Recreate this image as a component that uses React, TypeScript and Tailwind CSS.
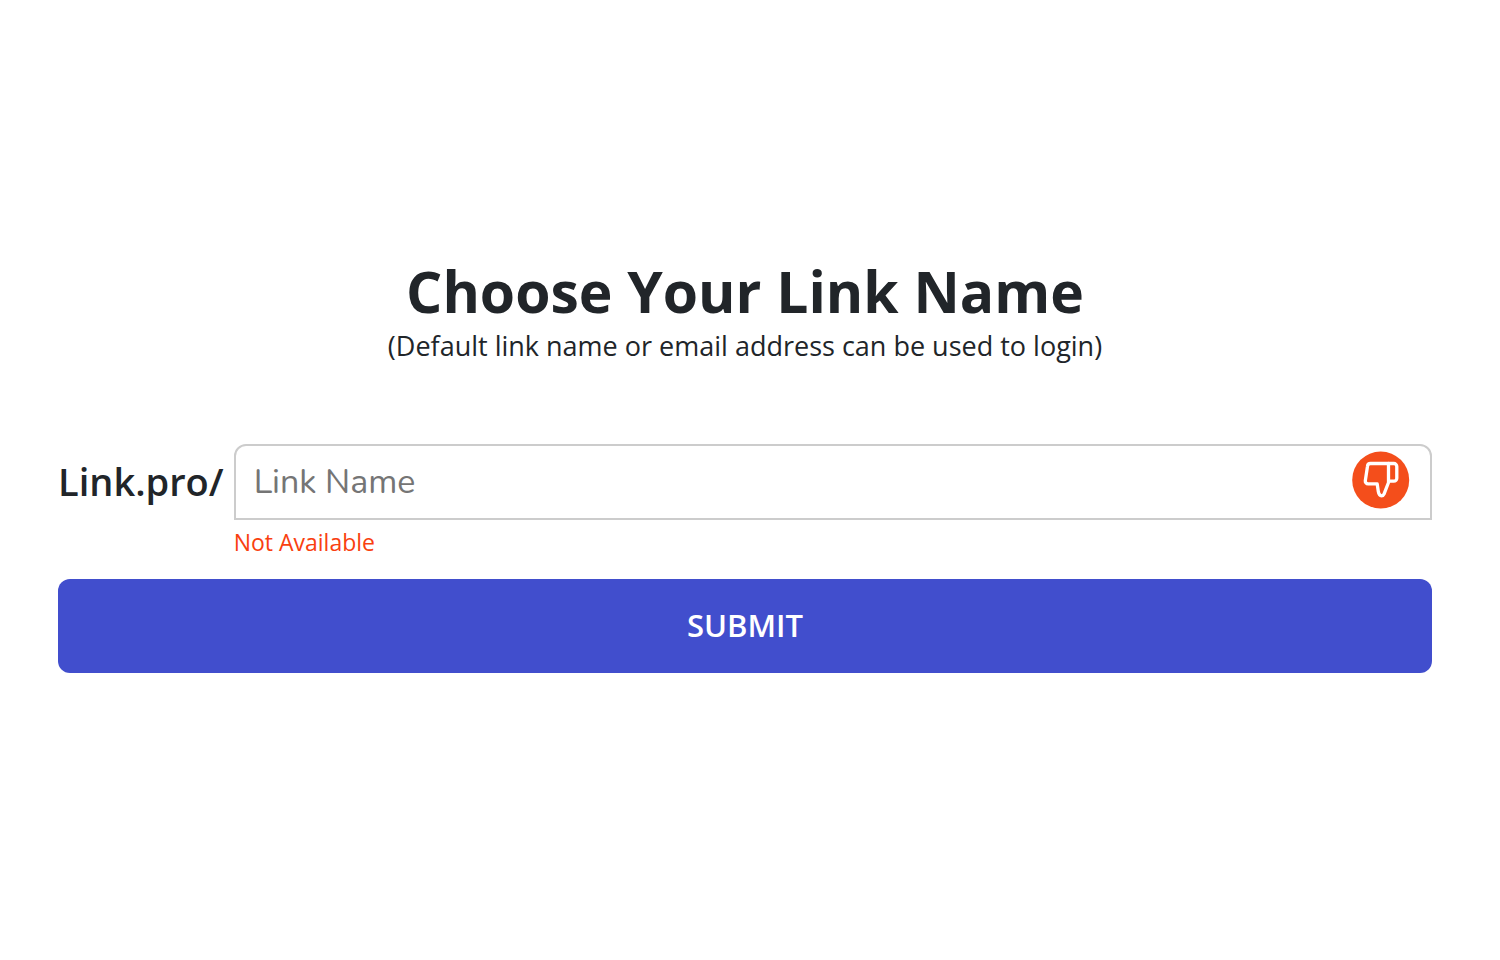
import { useState } from "react";

function ThumbsDownIcon() {
  return (
    <svg viewBox="0 0 58 58" className="size-[58px]" aria-hidden="true">
      <circle cx="28.700" cy="29" r="28.5" fill="#f44e1b" />
      <g fill="none" stroke="#fff" strokeWidth="3.300" strokeLinejoin="round" strokeLinecap="round">
        <path d="M36.500 12.500H18.500a3 3 0 0 0-3 2.700L13.300 29.700a2.800 2.800 0 0 0 2.800 3.200H25.200L26.300 40.500C26.800 43.500 27.700 44.800 29.500 44.800C30.900 44.800 31.600 44 32.200 42.700L36.500 31.500V12.500Z" />
        <path d="M36.500 12.500H41.800a3 3 0 0 1 3 3V27.200a3 3 0 0 1-3 3H36.800" />
      </g>
    </svg>
  );
}

export default function App() {
  const [name, setName] = useState("");
  return (
    <main className="flex min-h-screen flex-col justify-center bg-white pr-[68px] pb-[30px] pl-[58px] font-['Open_Sans',sans-serif] text-[#212529]">
      <h1 className="text-center text-[57px] leading-[68px] font-bold">Choose Your Link Name</h1>
      <p className="text-center text-[27px] leading-[42px]">(Default link name or email address can be used to login)</p>
      <form className="mt-[77px]" onSubmit={(e) => e.preventDefault()}>
        <div className="grid grid-cols-[auto_1fr] gap-x-[10px]">
          <label htmlFor="link-name" className="self-center pb-0.5 text-[38px] leading-[52px] font-semibold">
            Link.pro/
          </label>
          <div className="relative">
            <input
              id="link-name"
              type="text"
              placeholder="Link Name"
              value={name}
              onChange={(e) => setName(e.target.value)}
              aria-describedby="link-status"
              className="h-[76px] w-full rounded-t-xl border-2 border-[#cccccc] bg-white pr-24 pl-[18px] font-['Nunito','Noto_Sans',sans-serif] text-[34px] outline-none placeholder:text-[#757575]"
            />
            <span className="absolute top-[7px] right-[22px]">
              <ThumbsDownIcon />
            </span>
          </div>
          <p id="link-status" className="col-start-2 text-[23px] leading-[44px] text-[#f9400f]">Not Available</p>
        </div>
        <button type="submit" className="mt-[15px] h-[94px] w-full rounded-xl bg-[#414ecd] pb-0.5 text-[31px] font-semibold text-white">
          SUBMIT
        </button>
      </form>
    </main>
  );
}
